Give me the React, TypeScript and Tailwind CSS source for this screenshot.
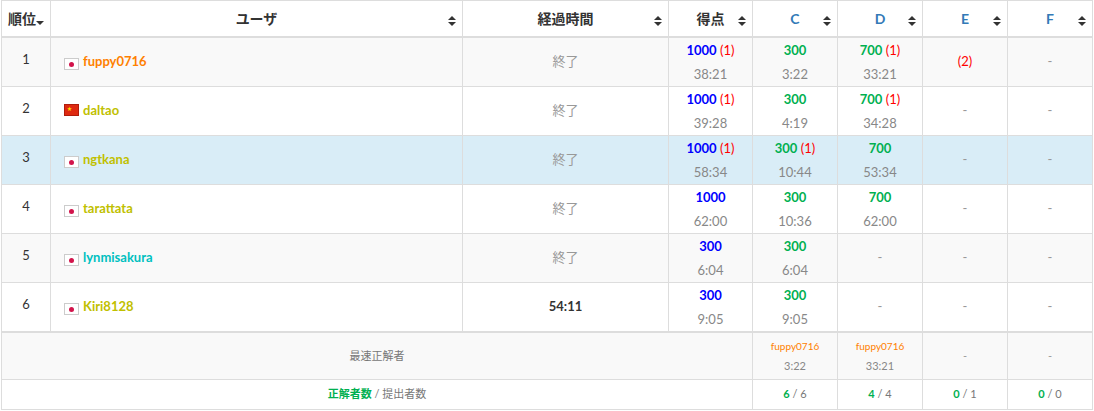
import React from 'react';

const SortIcon = ({ down }: { down?: boolean }) => (
  <svg width="8" height="10" viewBox="0 0 8 10" className="inline-block">
    {!down && <path d="M0 4 L4 0 L8 4 Z" fill="#333" />}
    <path d="M0 6 L4 10 L8 6 Z" fill="#333" />
  </svg>
);

const JpFlag = () => (
  <span className="inline-flex w-[15px] h-[12px] bg-white border border-[#ccc] items-center justify-center mr-[4px] align-[-1px]">
    <span className="w-[5px] h-[5px] rounded-full bg-[#d2144b]" />
  </span>
);
const CnFlag = () => (
  <span className="inline-block w-[15px] h-[12px] bg-[#de2910] border border-[#b01c0b] mr-[4px] align-[-1px] relative">
    <span className="absolute left-[2px] top-[1px] text-[5px] leading-none text-[#ffde00]">★</span>
  </span>
);

const rows = [
  { rank: 1, name: 'fuppy0716', color: 'text-[#ff8000]', cn: false, time: '終了', score: ['1000', '(1)', '38:21'], c: ['300', '', '3:22'], d: ['700', '(1)', '33:21'], e: 'pen2', bg: 'bg-[#f9f9f9]' },
  { rank: 2, name: 'daltao', color: 'text-[#c0c000]', cn: true, time: '終了', score: ['1000', '(1)', '39:28'], c: ['300', '', '4:19'], d: ['700', '(1)', '34:28'], e: '-', bg: 'bg-white' },
  { rank: 3, name: 'ngtkana', color: 'text-[#c0c000]', cn: false, time: '終了', score: ['1000', '(1)', '58:34'], c: ['300', '(1)', '10:44'], d: ['700', '', '53:34'], e: '-', bg: 'bg-[#d9edf7]' },
  { rank: 4, name: 'tarattata', color: 'text-[#c0c000]', cn: false, time: '終了', score: ['1000', '', '62:00'], c: ['300', '', '10:36'], d: ['700', '', '62:00'], e: '-', bg: 'bg-white' },
  { rank: 5, name: 'lynmisakura', color: 'text-[#00c0c0]', cn: false, time: '終了', score: ['300', '', '6:04'], c: ['300', '', '6:04'], d: null, e: '-', bg: 'bg-[#f9f9f9]' },
  { rank: 6, name: 'Kiri8128', color: 'text-[#c0c000]', cn: false, time: '54:11', score: ['300', '', '9:05'], c: ['300', '', '9:05'], d: null, e: '-', bg: 'bg-white' },
];

const td = 'border border-[#ddd] text-center align-middle';

function Score({ v, blue }: { v: string[] | null; blue?: boolean }) {
  if (!v) return <span className="text-[#999]">-</span>;
  return (
    <div className="leading-[24px]">
      <div>
        <span className={`font-bold ${blue ? 'text-[#0000ff]' : 'text-[#00b050]'}`}>{v[0]}</span>
        {v[1] && <span className="text-[#ff0000]"> {v[1]}</span>}
      </div>
      <div className="text-[#888]">{v[2]}</div>
    </div>
  );
}

export default function App() {
  return (
    <div className="bg-white w-[1094px] h-[411px] px-[1px] text-[13px] text-[#333]" style={{ fontFamily: 'Lato, "Noto Sans CJK JP", sans-serif' }}>
      <table className="border-collapse table-fixed w-[1091px]">
        <colgroup>
          <col className="w-[49px]" />
          <col className="w-[412px]" />
          <col className="w-[206px]" />
          <col className="w-[84px]" />
          <col className="w-[85px]" />
          <col className="w-[85px]" />
          <col className="w-[85px]" />
          <col className="w-[85px]" />
        </colgroup>
        <thead>
          <tr className="h-[36px] font-bold text-[14px]">
            <th className={`${td} border-b-2`}>順位<SortIcon down /></th>
            {['ユーザ', '経過時間', '得点', 'C', 'D', 'E', 'F'].map((h, i) => (
              <th key={h} className={`${td} border-b-2 relative`}>
                <span className={i >= 3 ? 'text-[#337ab7]' : ''}>{h}</span>
                <span className="absolute right-[6px] top-[12px] leading-none"><SortIcon /></span>
              </th>
            ))}
          </tr>
        </thead>
        <tbody>
          {rows.map((r) => (
            <tr key={r.rank} className={`h-[49px] ${r.bg}`}>
              <td className={td}><span className="relative top-[-2px]">{r.rank}</span></td>
              <td className={`${td} text-left pl-[13px]`}>
                {r.cn ? <CnFlag /> : <JpFlag />}
                <span className={`font-bold ${r.color}`}>{r.name}</span>
              </td>
              <td className={`${td} ${r.time === '終了' ? 'text-[#999]' : 'font-bold text-[#333]'}`}>{r.time}</td>
              <td className={td}><Score v={r.score} blue /></td>
              <td className={td}><Score v={r.c} /></td>
              <td className={td}><Score v={r.d} /></td>
              <td className={td}>{r.e === 'pen2' ? <span className="text-[#ff0000]">(2)</span> : <span className="text-[#999]">-</span>}</td>
              <td className={td}><span className="text-[#999]">-</span></td>
            </tr>
          ))}
          <tr className="h-[48px] bg-[#f9f9f9] text-[11px]">
            <td colSpan={4} className={`${td} border-t-2 text-[#777]`}>最速正解者</td>
            <td className={`${td} border-t-2`}><div className="text-[10px] text-[#ff8000] leading-[20px]">fuppy0716</div><div className="text-[#888] leading-[20px]">3:22</div></td>
            <td className={`${td} border-t-2`}><div className="text-[10px] text-[#ff8000] leading-[20px]">fuppy0716</div><div className="text-[#888] leading-[20px]">33:21</div></td>
            <td className={`${td} border-t-2 text-[#999]`}>-</td>
            <td className={`${td} border-t-2 text-[#999]`}>-</td>
          </tr>
          <tr className="h-[30px] text-[11px]">
            <td colSpan={4} className={`${td} text-[#777]`}><span className="font-bold text-[#00b050]">正解者数</span> / 提出者数</td>
            {[['6', '6'], ['4', '4'], ['0', '1'], ['0', '0']].map((v, i) => (
              <td key={i} className={`${td} text-[#777]`}><span className="font-bold text-[#00b050]">{v[0]}</span> / {v[1]}</td>
            ))}
          </tr>
        </tbody>
      </table>
    </div>
  );
}
